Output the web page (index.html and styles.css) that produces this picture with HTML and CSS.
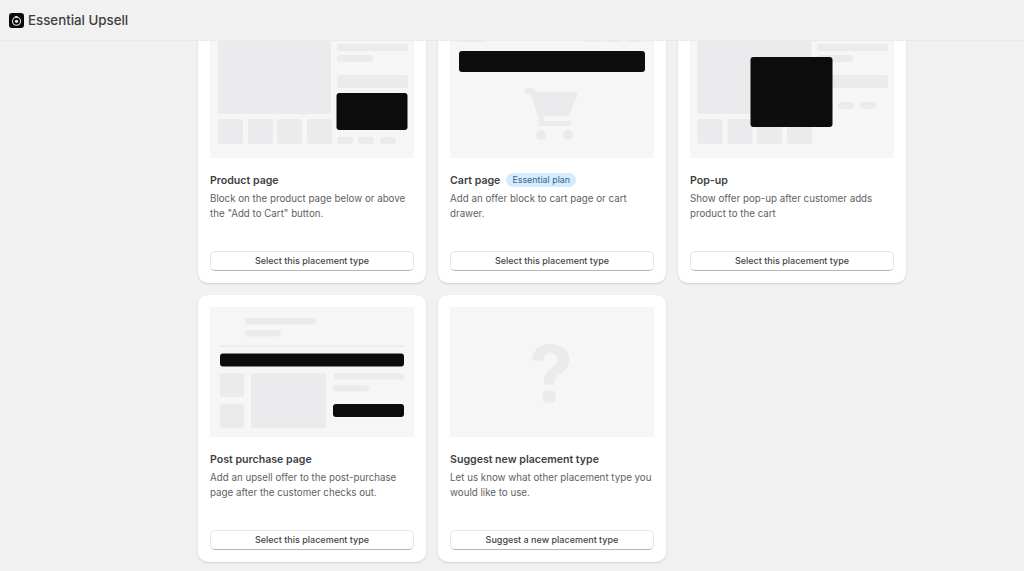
FILE: index.html
```html
<!DOCTYPE html>
<html lang="en">
<head>
  <meta charset="UTF-8" />
  <meta name="viewport" content="width=device-width, initial-scale=1.0"/>
  <title>Essential Upsell</title>
  <link rel="stylesheet" href="styles.css">
</head>
<body>
  <header class="topbar">
    <svg class="logo" viewBox="0 0 15 15" aria-hidden="true">
      <rect width="15" height="15" rx="3" fill="#0a0a0a"/>
      <circle cx="7.5" cy="8.300" r="4" fill="none" stroke="#e8e8e8" stroke-width="1.100"/>
      <circle cx="7.5" cy="8.300" r="1.600" fill="#e8e8e8"/>
      <path d="M5.500 3h3.400l-1.100 1.900z" fill="#e8e8e8"/>
    </svg>
    <span class="brand">Essential Upsell</span>
  </header>

  <main class="content">
    <div class="grid">
      <section class="card">
        <svg class="art" viewBox="0 0 204 130" aria-hidden="true">
          <g class="gray">
            <rect x="8" y="8" width="113" height="78" rx="2"/>
            <rect x="8" y="91" width="25" height="25" rx="2"/>
            <rect x="38" y="91" width="25" height="25" rx="2"/>
            <rect x="67" y="91" width="25" height="25" rx="2"/>
            <rect x="97" y="91" width="25" height="25" rx="2"/>
            <rect x="127" y="16" width="71" height="7" rx="3"/>
            <rect x="127" y="27" width="36" height="7" rx="3"/>
            <rect x="127" y="47" width="71" height="13" rx="3"/>
            <rect x="127" y="109" width="16" height="7" rx="3"/>
            <rect x="148" y="109" width="16" height="7" rx="3"/>
            <rect x="170" y="109" width="16" height="7" rx="3"/>
          </g>
          <rect class="dark" x="126.500" y="65" width="71" height="37" rx="3"/>
        </svg>
        <div class="title-row"><h3>Product page</h3></div>
        <p>Block on the product page below or above the "Add to Cart" button.</p>
        <button type="button">Select this placement type</button>
      </section>

      <section class="card">
        <svg class="art" viewBox="0 0 204 130" aria-hidden="true">
          <g class="gray">
            <rect x="8" y="8" width="27" height="6" rx="2"/>
            <rect x="135" y="8" width="15" height="6" rx="2"/>
            <rect x="155" y="8" width="15" height="6" rx="2"/>
            <rect x="178" y="8" width="15" height="6" rx="2"/>
            <path d="M75 60h9l2.500 4h41.500l-9 24h-26l1.500 5h27v5h-33v-8l-8-24-6-1z"/>
            <circle cx="91" cy="107" r="5"/>
            <circle cx="118" cy="107" r="5"/>
          </g>
          <rect class="dark" x="9" y="23" width="186" height="21" rx="3"/>
        </svg>
        <div class="title-row"><h3>Cart page</h3><span class="badge">Essential plan</span></div>
        <p>Add an offer block to cart page or cart drawer.</p>
        <button type="button">Select this placement type</button>
      </section>

      <section class="card">
        <svg class="art" viewBox="0 0 204 130" aria-hidden="true">
          <g class="gray">
            <rect x="7.500" y="8" width="114" height="78" rx="2"/>
            <rect x="7.500" y="91" width="25" height="25" rx="2"/>
            <rect x="37.500" y="91" width="25" height="25" rx="2"/>
            <rect x="67" y="91" width="25" height="25" rx="2"/>
            <rect x="97" y="91" width="25" height="25" rx="2"/>
            <rect x="127" y="16" width="71" height="7" rx="3"/>
            <rect x="127" y="27" width="36" height="7" rx="3"/>
            <rect x="127" y="47" width="71" height="13" rx="3"/>
            <rect x="127" y="74" width="16" height="7" rx="3"/>
            <rect x="148" y="74" width="16" height="7" rx="3"/>
            <rect x="170" y="74" width="16" height="7" rx="3"/>
          </g>
          <rect class="dark" x="60.500" y="29" width="82" height="70" rx="3"/>
        </svg>
        <div class="title-row"><h3>Pop-up</h3></div>
        <p>Show offer pop-up after customer adds product to the cart</p>
        <button type="button">Select this placement type</button>
      </section>

      <section class="card">
        <svg class="art" viewBox="0 0 204 130" aria-hidden="true">
          <g class="gray">
            <rect x="35" y="11" width="71" height="6.500" rx="3"/>
            <rect x="35" y="23" width="36" height="6.500" rx="3"/>
            <rect x="10" y="38.500" width="184" height="1.500"/>
            <rect x="10" y="66" width="24" height="24" rx="2"/>
            <rect x="10" y="97" width="24" height="24" rx="2"/>
            <rect x="41" y="66" width="75" height="55" rx="2"/>
            <rect x="123" y="66" width="71" height="6.500" rx="3"/>
            <rect x="123" y="78" width="36" height="6.500" rx="3"/>
          </g>
          <rect class="dark" x="10" y="46.500" width="184" height="13" rx="3"/>
          <rect class="dark" x="123" y="97" width="71" height="13" rx="3"/>
        </svg>
        <div class="title-row"><h3>Post purchase page</h3></div>
        <p>Add an upsell offer to the post-purchase page after the customer checks out.</p>
        <button type="button">Select this placement type</button>
      </section>

      <section class="card">
        <svg class="art" viewBox="0 0 204 130" aria-hidden="true">
          <text class="mark" x="101" y="95" text-anchor="middle">?</text>
        </svg>
        <div class="title-row"><h3>Suggest new placement type</h3></div>
        <p>Let us know what other placement type you would like to use.</p>
        <button type="button">Suggest a new placement type</button>
      </section>
    </div>
  </main>
</body>
</html>
```

FILE: styles.css
```css
html, body {
  height: 100%;
}

body {
  margin: 0;
  display: flex;
  flex-direction: column;
  overflow: hidden;
  background-color: #f1f1f1;
  color: #303030;
  font-family: Inter, "Liberation Sans", sans-serif;
}

.topbar {
  position: relative;
  z-index: 1;
  flex: none;
  height: 40px;
  display: flex;
  align-items: center;
  gap: 4px;
  padding-left: 9px;
  background-color: #f1f1f1;
  border-bottom: 1px solid #ebebeb;
}

.logo {
  width: 15px;
  height: 15px;
  margin-top: 1px;
}

.brand {
  font-size: 13.300px;
  font-weight: 500;
  color: #3f3f3f;
}

.content {
  flex: 1;
  overflow: hidden;
  padding-left: 198px;
}

.grid {
  width: 708px;
  margin-top: -25px;
  display: grid;
  grid-template-columns: repeat(3, 228px);
  grid-auto-rows: 267px;
  gap: 12px;
}

.card {
  display: flex;
  flex-direction: column;
  padding: 12px;
  background-color: #fff;
  border-radius: 10px;
  box-shadow: 0 1px 2px rgba(0,0,0,0.14);
}

.art {
  flex: none;
  display: block;
  width: 100%;
  height: 130px;
  background-color: #f6f6f7;
}

.gray {
  fill: #ebebed;
}

.dark {
  fill: #0c0c0c;
}

.mark {
  font-size: 78px;
  font-weight: 700;
  fill: #ebebed;
}

.title-row {
  display: flex;
  align-items: center;
  gap: 6px;
  height: 15px;
  margin-top: 15px;
}

h3 {
  margin: 0;
  font-size: 10.600px;
  font-weight: 600;
  color: #3f3f3f;
}

.badge {
  margin-bottom: 1px;
  padding: 0 6px;
  line-height: 14px;
  font-size: 8.900px;
  color: #33648f;
  background-color: #d5ebff;
  border-radius: 7px;
}

p {
  margin: 3px 0 0;
  font-size: 9.750px;
  line-height: 15px;
  color: #616161;
}

button {
  margin-top: auto;
  height: 20px;
  padding: 0 0 2px;
  background-color: #fff;
  border: 1px solid #e6e6e6;
  border-bottom-color: #b5b5b5;
  border-radius: 5px;
  font-family: inherit;
  font-size: 9px;
  font-weight: 550;
  color: #444;
  cursor: pointer;
}
```
